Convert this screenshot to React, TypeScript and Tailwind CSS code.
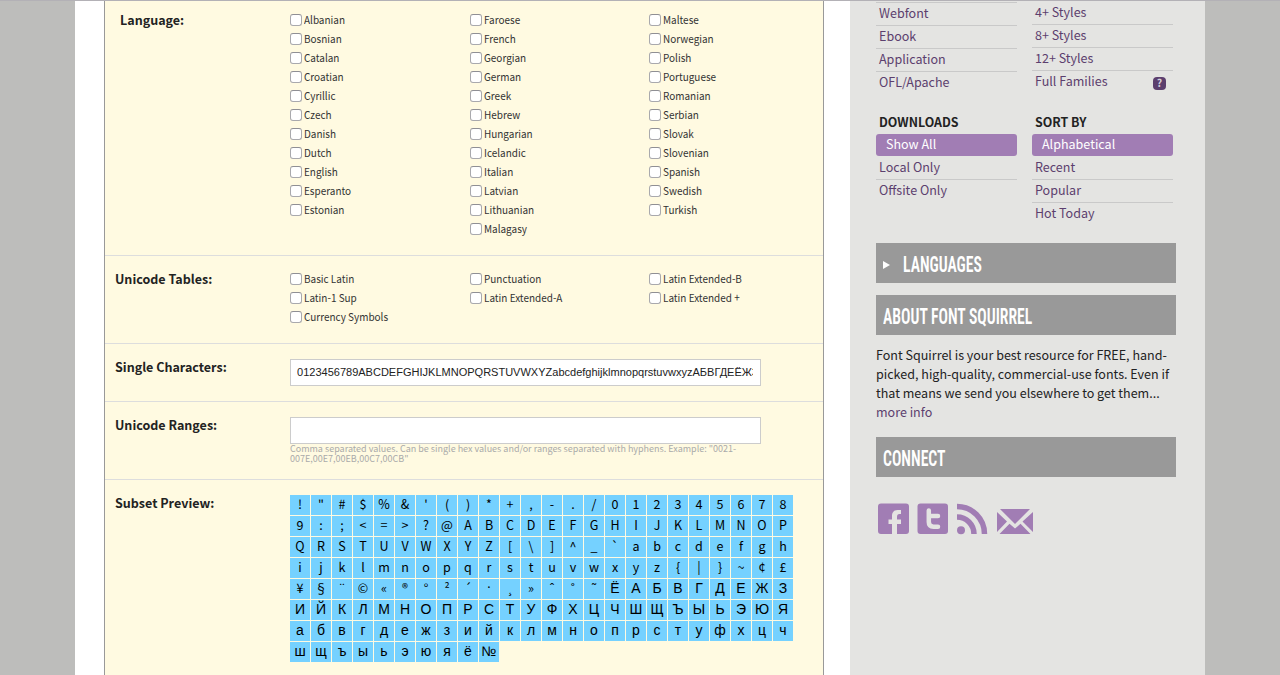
import type { ReactNode } from "react";

const languages = [
  ["Albanian", "Bosnian", "Catalan", "Croatian", "Cyrillic", "Czech", "Danish", "Dutch", "English", "Esperanto", "Estonian"],
  ["Faroese", "French", "Georgian", "German", "Greek", "Hebrew", "Hungarian", "Icelandic", "Italian", "Latvian", "Lithuanian", "Malagasy"],
  ["Maltese", "Norwegian", "Polish", "Portuguese", "Romanian", "Serbian", "Slovak", "Slovenian", "Spanish", "Swedish", "Turkish"],
];

const unicodeTables = [
  ["Basic Latin", "Latin-1 Sup", "Currency Symbols"],
  ["Punctuation", "Latin Extended-A"],
  ["Latin Extended-B", "Latin Extended +"],
];

const subset = Array.from(
  "!\"#$%&'()*+,-./0123456789:;<=>?@ABCDEFGHIJKLMNOPQRSTUVWXYZ[\\]^_`abcdefghijklmnopqrstuvwxyz{|}~¢£¥§¨©«®°²´·¸»ˆ˚˜" +
    "ЁАБВГДЕЖЗИЙКЛМНОПРСТУФХЦЧШЩЪЫЬЭЮЯабвгдежзийклмнопрстуфхцчшщъыьэюяё№",
);

const singleCharacters =
  "0123456789ABCDEFGHIJKLMNOPQRSTUVWXYZabcdefghijklmnopqrstuvwxyzАБВГДЕЁЖЗ";

function CheckColumns({ columns }: { columns: string[][] }) {
  return (
    <div className="flex">
      {columns.map((column, i) => (
        <ul key={column[0]} className={i === 1 ? "w-[179px]" : "w-[180px]"}>
          {column.map((name) => (
            <li key={name} className="flex h-[19px] items-start">
              <span className="mt-1 h-3 w-3 shrink-0 rounded-[3px] border border-[#a9a9ad] border-t-[#8f8f94] bg-white" />
              <span className="ml-0.5 origin-left scale-x-[0.905] whitespace-nowrap text-[11px] leading-[19px] text-[#333]">
                {name}
              </span>
            </li>
          ))}
        </ul>
      ))}
    </div>
  );
}

function Section({ label, height, inset, children }: { label: string; height: string; inset?: boolean; children: ReactNode }) {
  return (
    <section className={`flex border-b border-[#ddd] ${height}`}>
      <h3 className={`w-[185px] shrink-0 text-[12.54px] leading-[19px] font-bold text-[#222] ${inset ? "pt-[9px] pl-[15px]" : "pt-[13px] pl-[10px]"}`}>
        {label}
      </h3>
      {children}
    </section>
  );
}

function NavItem({ children, last, selected }: { children: ReactNode; last?: boolean; selected?: boolean }) {
  if (selected) {
    return (
      <li className="mb-px h-[22px] rounded-[3px] bg-[#a17db4] pl-[10px] text-white">{children}</li>
    );
  }
  return (
    <li className={`h-[23px] pl-[3px] text-[#5c3f6e] ${last ? "" : "border-b border-[#c9c9c9]"}`}>{children}</li>
  );
}

function Bar({ children, className }: { children: ReactNode; className: string }) {
  return (
    <h2 className={`flex h-10 w-[300px] items-center bg-[#999] pl-[7px] text-white ${className}`}>{children}</h2>
  );
}

function BarText({ children }: { children: ReactNode }) {
  return (
    <span className="mt-[3px] origin-left scale-x-[0.7] whitespace-nowrap font-['Roboto_Condensed',Roboto,sans-serif] text-[22.4px] leading-none font-semibold">
      {children}
    </span>
  );
}

export default function App() {
  return (
    <div className="h-[675px] overflow-hidden border-t border-[#b3b1b6] bg-[#bdbdbb] font-['Noto_Sans_CJK_SC',sans-serif]">
      <div className="ml-[75px] flex h-[674px] w-[1130px] bg-white">
        <main className="ml-[29px] h-full w-[720px] border-x border-[#999] bg-[#fffae1]">
          <Section label="Language:" height="h-[255px]" inset>
            <div className="pt-[9px]"><CheckColumns columns={languages} /></div>
          </Section>
          <Section label="Unicode Tables:" height="h-[88px]">
            <div className="pt-[13px]"><CheckColumns columns={unicodeTables} /></div>
          </Section>
          <Section label="Single Characters:" height="h-[58px]">
            <div className="mt-[15px] h-[27px] w-[471px] border border-[#ccc] bg-white pr-[7px] pl-1.5">
              <div className="overflow-hidden whitespace-nowrap font-['Liberation_Sans',sans-serif] text-[11.03px] leading-[25px] text-[#222]">
                {singleCharacters}
              </div>
            </div>
          </Section>
          <Section label="Unicode Ranges:" height="h-[78px]">
            <div className="w-[471px] pt-[15px]">
              <div className="h-[27px] border border-[#ccc] bg-white" />
              <p className="whitespace-nowrap text-[9px] leading-[10px] text-[#aaa]">
                Comma separated values. Can be single hex values and/or ranges separated with hyphens. Example: "0021-
                <br />
                007E,00E7,00EB,00C7,00CB"
              </p>
            </div>
          </Section>
          <Section label="Subset Preview:" height="h-[300px]">
            <div className="grid h-fit w-[503px] grid-cols-[repeat(24,20px)] gap-px pt-[15px]">
              {subset.map((ch, i) => (
                <span
                  key={i}
                  className={
                    ch >= "Ѐ"
                      ? "flex h-5 justify-center overflow-hidden bg-[#75d1ff] font-['Liberation_Sans',sans-serif] text-[14px] leading-[19px] text-black"
                      : ch === "·"
                        ? "flex h-5 justify-center overflow-hidden bg-[#75d1ff] font-['Noto_Sans',sans-serif] text-[12.54px] leading-[18px] text-black"
                        : "flex h-5 justify-center overflow-hidden bg-[#75d1ff] text-[12.54px] leading-[18px] text-black"
                  }
                >
                  {ch}
                </span>
              ))}
            </div>
          </Section>
        </main>

        <aside className="ml-[26px] h-full w-[355px] bg-[#e4e4e2] pl-[26px]">
          <div className="flex h-[242px] gap-[15px] text-[12.54px] leading-[19px]">
            <div className="w-[141px]">
              <ul className="mt-px border-t border-[#c9c9c9]">
                <NavItem>Webfont</NavItem>
                <NavItem>Ebook</NavItem>
                <NavItem>Application</NavItem>
                <NavItem last>OFL/Apache</NavItem>
              </ul>
              <h4 className="mt-[18px] h-[21px] pl-[3px] text-[12.4px] font-bold text-[#222]">DOWNLOADS</h4>
              <ul>
                <NavItem selected>Show All</NavItem>
                <NavItem>Local Only</NavItem>
                <NavItem last>Offsite Only</NavItem>
              </ul>
            </div>
            <div className="w-[141px]">
              <ul className="pt-px">
                <NavItem>4+ Styles</NavItem>
                <NavItem>8+ Styles</NavItem>
                <NavItem>12+ Styles</NavItem>
                <NavItem last>
                  <span className="flex justify-between pr-[7px]">
                    Full Families
                    <span className="mt-1.5 flex h-[13px] w-[13px] items-center justify-center rounded-[4px] bg-[#5c3f6e] text-[10.5px] leading-none font-bold text-[#d6cfdb]">
                      ?
                    </span>
                  </span>
                </NavItem>
              </ul>
              <h4 className="mt-[19px] h-[21px] pl-[3px] text-[12.4px] font-bold text-[#222]">SORT BY</h4>
              <ul>
                <NavItem selected>Alphabetical</NavItem>
                <NavItem>Recent</NavItem>
                <NavItem>Popular</NavItem>
                <NavItem last>Hot Today</NavItem>
              </ul>
            </div>
          </div>

          <Bar className="mb-3">
            <svg className="mt-[3px] mr-[13px]" width="7" height="8" viewBox="0 0 7 8">
              <path d="M0 0L7 4L0 8Z" fill="#fff" />
            </svg>
            <BarText>LANGUAGES</BarText>
          </Bar>
          <Bar className="mb-[10px]"><BarText>ABOUT FONT SQUIRREL</BarText></Bar>
          <p className="h-[92px] whitespace-nowrap text-[12.54px] leading-[19px] text-[#222]">
            Font Squirrel is your best resource for FREE, hand-<br />
            picked, high-quality, commercial-use fonts. Even if<br />
            that means we send you elsewhere to get them...<br />
            <span className="text-[#5c3f6e]">more info</span>
          </p>
          <Bar className=""><BarText>CONNECT</BarText></Bar>

          <svg className="mt-[18px]" width="164" height="45" viewBox="882 495 164 45" fill="#a17db4">
            <path d="M887 503.500h25a3 3 0 0 1 3 3v24.500a3 3 0 0 1-3 3h-9v-10h4v-4.500h-4v-2.500c0-2 .7-3 2.500-3h1.500v-4h-3.500c-4 0-5.500 3-5.500 6v3.500h-3.500v4.500h3.500v10h-11a3 3 0 0 1-3-3v-24.500a3 3 0 0 1 3-3z" />
            <rect x="923.500" y="503.500" width="30.500" height="30.500" rx="3" />
            <path d="M934.800 510.500v11.500c0 3 1.700 4.700 4.700 4.700h4.500M935 516h9" fill="none" stroke="#e4e4e2" strokeWidth="4.500" strokeLinecap="round" />
            <circle cx="967" cy="530.200" r="4" />
            <path d="M963 517a17 17 0 0 1 17 17M963 506.500a27.500 27.500 0 0 1 27.500 27.500" fill="none" stroke="#a17db4" strokeWidth="5.500" />
            <path d="M1006 509h30l-15 15zM1003 512l10 9.500L1003 532zM1039 512v20l-10.500-10.500zM1015.500 523.800l5.500 4.700 5.500-4.700 10 10.200h-31z" />
          </svg>
        </aside>
      </div>
    </div>
  );
}
